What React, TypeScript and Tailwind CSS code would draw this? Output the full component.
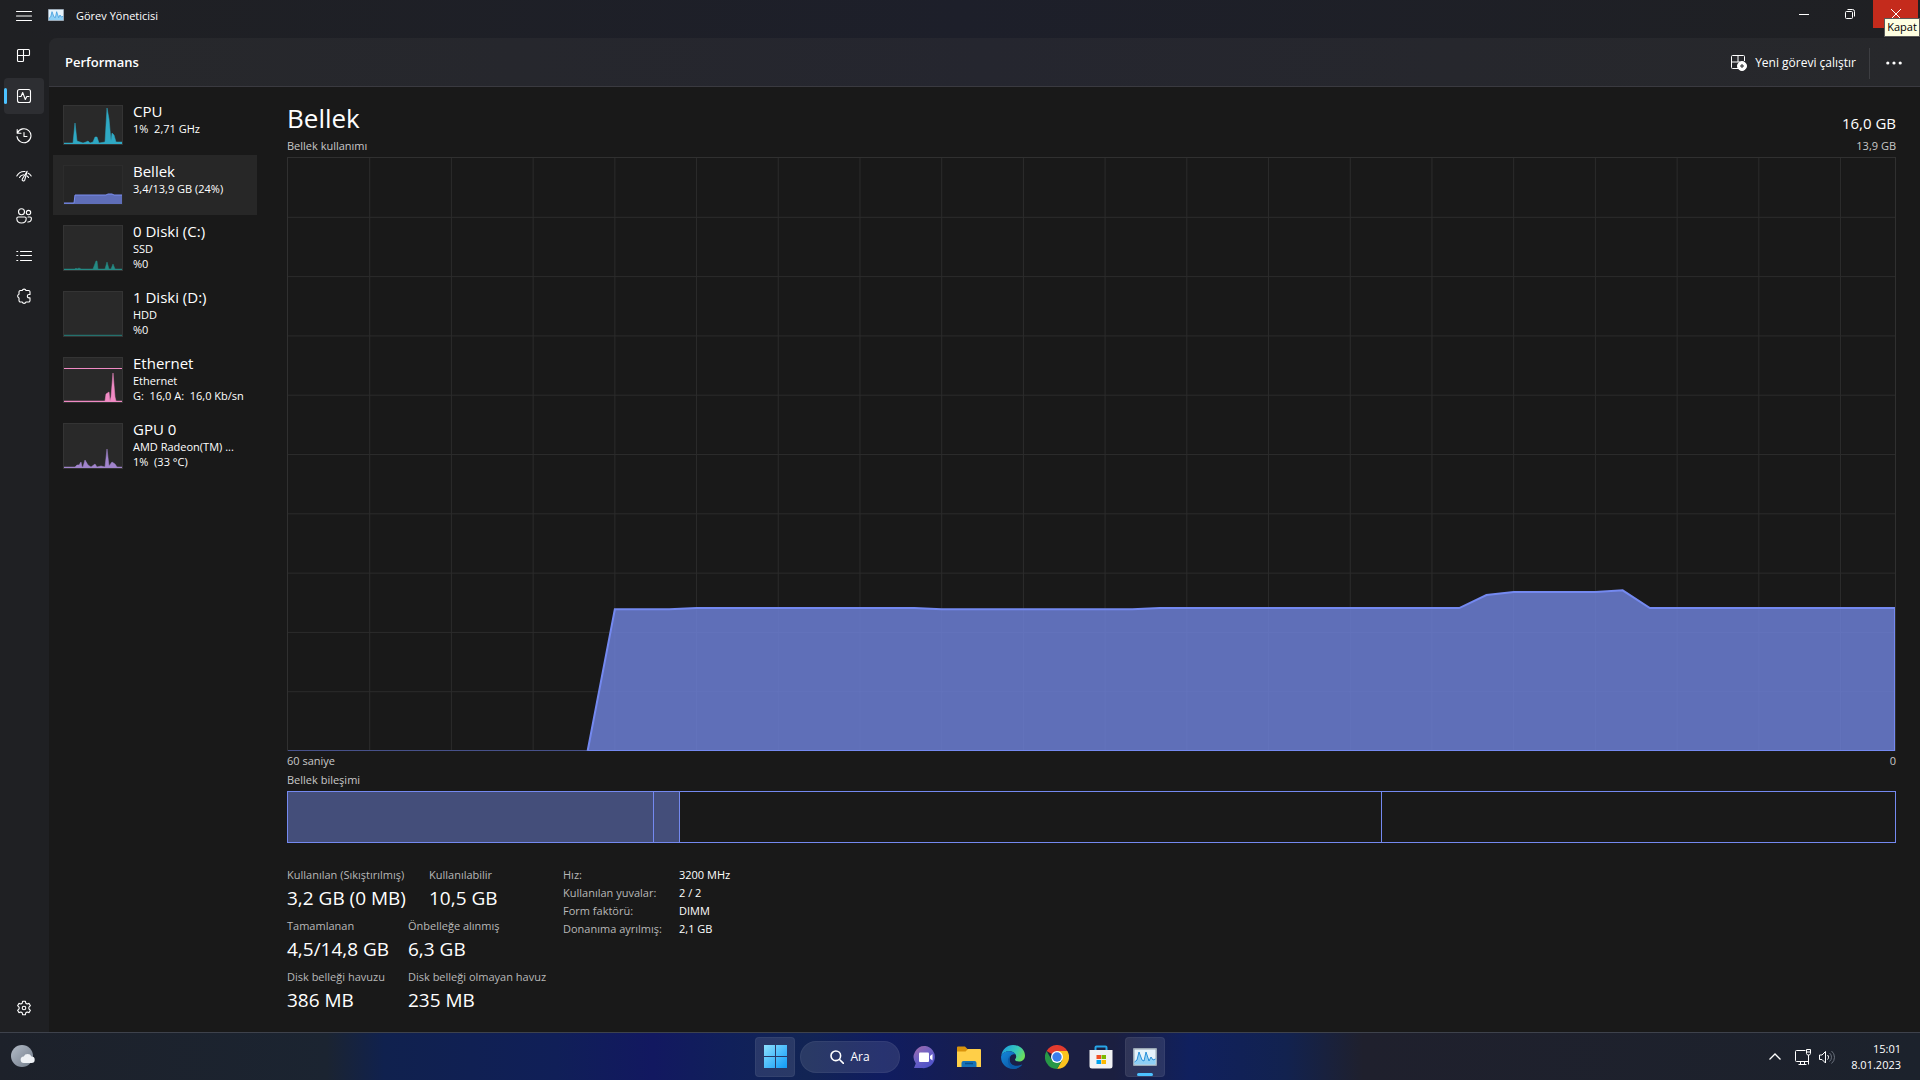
import type { ReactNode } from 'react';
import clsx from 'clsx';

type Resource = {
  id: string;
  title: string;
  lines: string[];
  color: string;
  fill: string;
  area: string;
  line?: string;
};

const resources: Resource[] = [
  {
    id: 'cpu', title: 'CPU', lines: ['1%  2,71 GHz'], color: '#2fa9c4', fill: '#2fa9c4',
    area: '1,38 10,38 12,18 14,36 17,37 20,38 23,37 25,36 27,38 30,37 32,32 34,32 36,38 42,37 44,3 46,14 48,36 49,28 51,30 53,37 56,37 59,37',
  },
  {
    id: 'mem', title: 'Bellek', lines: ['3,4/13,9 GB (24%)'], color: '#7a8df0', fill: '#5f6eb8',
    area: '1,38 11,38 12,30 43,30 45,29 49,29 51,30 59,30',
  },
  {
    id: 'disk0', title: '0 Diski (C:)', lines: ['SSD', '%0'], color: '#248a84', fill: '#248a84',
    area: '1,44 12,44 13,43 14,44 16,43 18,44 30,44 33,36 34,36 35,44 42,44 44,37 46,44 48,44 50,39 52,44 59,44',
  },
  { id: 'disk1', title: '1 Diski (D:)', lines: ['HDD', '%0'], color: '#24706c', fill: '#24706c', area: '1,44 59,44' },
  {
    id: 'eth', title: 'Ethernet', lines: ['Ethernet', 'G:  16,0 A:  16,0 Kb/sn'], color: '#f08ac4', fill: '#f08ac4',
    area: '1,44 42,44 43,37 46,35 47,44 48,40 50,16 52,40 53,44 59,44', line: '1,11.5 59,11.5',
  },
  {
    id: 'gpu', title: 'GPU 0', lines: ['AMD Radeon(TM) ...', '1%  (33 °C)'], color: '#a184cc', fill: '#a184cc',
    area: '1,44 12,44 14,42 16,42 18,39 19,44 20,44 22,37 25,42 28,44 32,41 34,44 38,43 42,44 44,26 46,43 49,39 52,41 54,44 59,44',
  },
];

const samples = [
  [11, 0], [12, 23.9], [14, 23.9], [15, 24.1], [23, 24.1], [24, 23.9], [31, 23.9], [32, 24.1],
  [43, 24.1], [44, 26.3], [45, 26.8], [48, 26.8], [49, 27.1], [50, 24.1], [59, 24.1],
];

const statRows = [
  [['Kullanılan (Sıkıştırılmış)', '3,2 GB (0 MB)'], ['Kullanılabilir', '10,5 GB']],
  [['Tamamlanan', '4,5/14,8 GB'], ['Önbelleğe alınmış', '6,3 GB']],
  [['Disk belleği havuzu', '386 MB'], ['Disk belleği olmayan havuz', '235 MB']],
];

const details = [
  ['Hız:', '3200 MHz'],
  ['Kullanılan yuvalar:', '2 / 2'],
  ['Form faktörü:', 'DIMM'],
  ['Donanıma ayrılmış:', '2,1 GB'],
];

function Icon({ children }: { children: ReactNode }) {
  return (
    <svg className="w-4 h-4" viewBox="0 0 16 16" fill="none" stroke="currentColor" strokeWidth="1.1" strokeLinecap="round" strokeLinejoin="round">
      {children}
    </svg>
  );
}

const navItems = [
  {
    label: 'İşlemler',
    icon: <Icon><path d="M2.500 1.500h10a1 1 0 0 1 1 1v4a1 1 0 0 1-1 1H7.500v5a1 1 0 0 1-1 1h-4a1 1 0 0 1-1-1v-10a1 1 0 0 1 1-1zM1.500 7.500h6v-6" /></Icon>,
  },
  {
    label: 'Performans',
    icon: <Icon><rect x="1.500" y="1.500" width="13" height="13" rx="2" /><path d="M3 8.500h2l1.700-4 2.600 7 1.500-3H13" /></Icon>,
  },
  {
    label: 'Uygulama geçmişi',
    icon: <Icon><path d="M1.200 1.500v3.800H5M1.500 5A7 7 0 1 1 1 8.500M8 4.500v4h3" /></Icon>,
  },
  {
    label: 'Başlangıç uygulamaları',
    icon: <Icon><path d="M.8 8A8.500 8.500 0 0 1 9 3.500M3.500 9.500a5 5 0 0 1 4-2.800M15.200 8a8 8 0 0 0-3-2.700M12.500 9.500a5 5 0 0 0-1.300-1.500M11.200 3.200 6.300 11a1.300 1.300 0 0 0 2.400 1.200z" /></Icon>,
  },
  {
    label: 'Kullanıcılar',
    icon: <Icon><circle cx="5.500" cy="3.800" r="3" /><circle cx="12.500" cy="4.600" r="2.200" /><path d="M.8 10.500a1.500 1.500 0 0 1 1.500-1.500h6.400a1.500 1.500 0 0 1 1.500 1.500c0 2.800-1.800 4.500-4.700 4.500S.8 13.300.8 10.500zM12 9h2a1.500 1.500 0 0 1 1.400 1.500c0 2.200-1.200 3.500-3.600 3.500" /></Icon>,
  },
  {
    label: 'Ayrıntılar',
    icon: <Icon><path d="M4.500 3.500h11M4.500 7.500h11M4.500 12.500h11M.8 3.500h1M.8 7.500h1M.8 12.500h1" /></Icon>,
  },
  {
    label: 'Hizmetler',
    icon: <Icon><path d="M6.200 2.500a2 2 0 0 1 3.800 0h2.500A1.500 1.500 0 0 1 14 4v2.500h-1a1.700 1.700 0 0 0 0 3.400h1v2.600a1.500 1.500 0 0 1-1.500 1.500H10a2 2 0 0 1-3.800 0H4.500A1.500 1.500 0 0 1 3 12.500V10a2 2 0 0 1 0-3.800V4a1.500 1.500 0 0 1 1.500-1.500z" /></Icon>,
  },
];

function TaskManagerLogo({ className }: { className: string }) {
  return (
    <svg className={className} viewBox="0 0 24 18">
      <rect width="24" height="18" rx="1" fill="#9aa8b5" />
      <rect x="1.500" y="1.500" width="21" height="15" fill="#e6f3fb" />
      <path d="M1.500 14 4 12l2-8 3 8 2 1 2-9 3 9 2-4 2 3 2.500-1v5.500h-21z" fill="#8fd0f5" />
      <path d="m1.500 14 2.500-2 2-8 3 8 2 1 2-9 3 9 2-4 2 3 2.500-1" fill="none" stroke="#2a90d8" />
    </svg>
  );
}

function TitleBar() {
  return (
    <header className="relative flex h-[38px] items-start bg-linear-to-r from-[#1f2023] via-[#1d1f2a] to-[#1f2023]">
      <button aria-label="Menü" className="ml-4 mt-2"><Icon><path d="M.5 3.500h15M.5 8h15M.5 12.500h15" /></Icon></button>
      <TaskManagerLogo className="ml-4 mt-[9px] h-3 w-4" />
      <h1 className="ml-3 mt-2 flex-1 text-[11px] leading-4">Görev Yöneticisi</h1>
      <div className="mr-[2px] flex">
        <button aria-label="Simge durumuna küçült" className="flex h-7 w-[46px] items-center justify-center"><span className="h-px w-[10px] bg-white" /></button>
        <button aria-label="Önceki boyut" className="flex h-7 w-[46px] items-center justify-center">
          <svg className="h-[10px] w-[10px]" viewBox="0 0 10 10" fill="none" stroke="white"><rect x=".5" y="2.500" width="7" height="7" rx="1" /><path d="M2.500.5h5a2 2 0 0 1 2 2v5" /></svg>
        </button>
        <button aria-label="Kapat" aria-describedby="close-tip" className="flex h-7 w-[45px] items-center justify-center bg-[#c42b1c]">
          <svg className="h-[10px] w-[10px]" viewBox="0 0 10 10" stroke="white"><path d="m0 0 10 10M10 0 0 10" /></svg>
        </button>
      </div>
      <div id="close-tip" role="tooltip" className="absolute right-0 top-[18px] z-10 flex h-[19px] w-9 items-center justify-center border border-[#5a5a5a] bg-[#ffffe1] text-[11px] text-black">Kapat</div>
    </header>
  );
}

function Sidebar() {
  return (
    <nav className="flex w-[49px] shrink-0 flex-col gap-1 bg-[#1f2023] pb-[6px] pl-1">
      {navItems.map((item, i) => (
        <button key={item.label} aria-label={item.label} className={clsx('relative flex h-9 w-10 items-center justify-center rounded', i === 1 && 'bg-[#2d2e32]')}>
          {i === 1 && <span className="absolute left-0 top-[10px] h-4 w-[3px] rounded-full bg-[#4cc2ff]" />}
          {item.icon}
        </button>
      ))}
      <button aria-label="Ayarlar" className="mt-auto flex h-9 w-10 items-center justify-center">
        <Icon>
          <circle cx="8" cy="8" r="1.800" />
          <path d="M6.700 1.200h2.600l.5 2 1.300.8 2-.6 1.300 2.300-1.500 1.400v1.800l1.500 1.400-1.300 2.300-2-.6-1.300.8-.5 2H6.700l-.5-2-1.300-.8-2 .6-1.300-2.300 1.500-1.400V7.100L1.600 5.700l1.300-2.300 2 .6 1.300-.8z" />
        </Icon>
      </button>
    </nav>
  );
}

function ResourceItem({ item }: { item: Resource }) {
  const h = item.lines.length > 1 ? 46 : 40;
  const active = item.id === 'mem';
  return (
    <button className={clsx('flex w-full items-start gap-[10px] px-[10px] pt-[10px] text-left', item.lines.length > 1 ? 'h-[66px]' : 'h-[60px]', active && 'bg-[#272727]')}>
      <svg className={clsx('w-[60px] shrink-0', h === 46 ? 'h-[46px]' : 'h-10')} viewBox={`0 0 60 ${h}`}>
        <rect x=".5" y=".5" width="59" height={h - 1} fill={active ? '#252525' : '#292929'} stroke={active ? '#2c2c2c' : '#343434'} />
        <polygon points={`${item.area} 59,${h - 1} 1,${h - 1}`} fill={item.fill} />
        <polyline points={item.area} fill="none" stroke={item.color} strokeWidth={active ? 1 : 0.5} />
        {item.line && <polyline points={item.line} fill="none" stroke={item.color} />}
      </svg>
      <span className="-mt-1 block min-w-0 whitespace-nowrap">
        <span className="block text-[15px] leading-5">{item.title}</span>
        {item.lines.map((l) => <span key={l} className="block whitespace-pre text-[11px] leading-[15px]">{l}</span>)}
      </span>
    </button>
  );
}

function MemoryChart() {
  const points = samples.map(([x, v]) => `${x},${100 - v}`).join(' ');
  const vertical = Array.from({ length: 19 }, (_, i) => (i + 1) * 3);
  const horizontal = Array.from({ length: 9 }, (_, i) => (i + 1) * 10);
  return (
    <div className="min-h-0 flex-1 border border-b-0 border-[#303030]">
      <svg className="block h-full w-full" viewBox="0 0 59 100" preserveAspectRatio="none">
        <g stroke="#2c2c2c" shapeRendering="crispEdges">
          {vertical.map((x) => <line key={x} x1={x} x2={x} y1="0" y2="100" vectorEffect="non-scaling-stroke" />)}
          {horizontal.map((y) => <line key={y} x1="0" x2="59" y1={y} y2={y} vectorEffect="non-scaling-stroke" />)}
        </g>
        <polygon points={`${points} 59,100`} fill="#7084e0" fillOpacity="0.8" />
        <line x1="0" x2="11" y1="100" y2="100" stroke="#47518a" strokeWidth="2" vectorEffect="non-scaling-stroke" />
        <polyline points={`${points} 59,100 11,100`} fill="none" stroke="#7489f0" strokeWidth="2" vectorEffect="non-scaling-stroke" />
      </svg>
    </div>
  );
}

function MemoryPanel() {
  return (
    <main className="flex min-w-0 flex-1 flex-col pb-[17px] pl-[30px] pr-6 pt-[14px]">
      <div className="flex items-end justify-between">
        <h2 className="text-[26px] leading-[34px]">Bellek</h2>
        <span className="text-[15px] leading-6">16,0 GB</span>
      </div>
      <div className="flex h-[22px] items-center justify-between text-[11px] text-[#c8c8c8]"><span>Bellek kullanımı</span><span>13,9 GB</span></div>
      <MemoryChart />
      <div className="flex h-5 items-center justify-between text-[11px] text-[#c8c8c8]"><span>60 saniye</span><span>0</span></div>
      <div className="flex h-5 items-start text-[11px] leading-[18px] text-[#c8c8c8]">Bellek bileşimi</div>
      <div className="flex h-[52px] border border-[#7489f0]">
        <div className="w-[22.8%] border-r border-[#7489f0] bg-[#444e7a]" />
        <div className="w-[1.6%] border-r border-[#7489f0] bg-[#444e7a]" />
        <div className="w-[43.7%] border-r border-[#7489f0]" />
      </div>
      <div className="mt-6 flex">
        <div className="flex w-[276px] flex-col gap-[5px] whitespace-nowrap">
          {statRows.map((row, i) => (
            <dl key={i} className="flex">
              {row.map(([label, value], col) => (
                <div key={label} className={clsx(col === 0 && (i === 0 ? 'w-[142px]' : 'w-[121px]'))}>
                  <dt className="text-[11px] leading-4 text-[#b8b8b8]">{label}</dt>
                  <dd className="text-[19px] leading-[30px]">{value}</dd>
                </div>
              ))}
            </dl>
          ))}
        </div>
        <table className="self-start whitespace-nowrap text-left text-[11px] leading-4">
          <tbody>
            {details.map(([label, value]) => (
              <tr key={label}><th scope="row" className="w-[116px] p-0 pb-[2px] font-normal text-[#b8b8b8]">{label}</th><td className="p-0 pb-[2px]">{value}</td></tr>
            ))}
          </tbody>
        </table>
      </div>
    </main>
  );
}

function TaskButton({ label, active, children }: { label: string; active?: boolean; children: ReactNode }) {
  return (
    <button aria-label={label} className={clsx('flex h-10 w-10 items-center justify-center rounded', active && 'border border-white/5 bg-white/10')}>
      {children}
    </button>
  );
}

function Taskbar() {
  return (
    <footer className="grid h-12 shrink-0 grid-cols-[1fr_auto_1fr] items-center border-t border-[#3e424c] bg-[linear-gradient(90deg,#1d212a_0%,#1b2431_17%,#10214e_20%,#101f58_29%,#121860_34%,#10205a_38%,#122454_42%,#101c60_46%,#1b1f44_54%,#1b1f40_58%,#10205e_62%,#12224f_67%,#1f202d_71%,#1c222c_100%)]">
      <button aria-label="Hava durumu" className="ml-[11px] w-6">
        <svg className="h-6 w-6" viewBox="0 0 24 24">
          <defs><linearGradient id="moon" x1="0" y1="0" x2="1" y2="1"><stop stopColor="#b4bcc8" /><stop offset="1" stopColor="#717c8a" /></linearGradient></defs>
          <circle cx="11" cy="11" r="11" fill="url(#moon)" />
          <path d="M13 18a3.200 3.200 0 0 1-.3-6.400 4.300 4.300 0 0 1 7.800 0A3.200 3.200 0 0 1 20.500 18z" fill="#eef1f5" />
        </svg>
      </button>
      <div className="flex items-center gap-1">
        <TaskButton label="Başlat" active>
          <svg className="h-[23px] w-[23px]" viewBox="0 0 23 23">
            <defs><linearGradient id="win" x1="0" y1="0" x2="1" y2="1"><stop stopColor="#8ce0ff" /><stop offset="1" stopColor="#0f9bf8" /></linearGradient></defs>
            <path d="M0 0h11v11H0zM12 0h11v11H12zM0 12h11v11H0zM12 12h11v11H12z" fill="url(#win)" />
          </svg>
        </TaskButton>
        <button className="mx-px flex h-8 w-[100px] items-center justify-center gap-[6px] rounded-full border border-white/5 bg-white/10 text-xs">
          <svg className="h-[14px] w-[14px]" viewBox="0 0 14 14" fill="none" stroke="white" strokeWidth="1.600" strokeLinecap="round"><circle cx="5.800" cy="5.800" r="4.800" /><path d="m9.500 9.500 4 4" /></svg>
          Ara
        </button>
        <TaskButton label="Sohbet">
          <svg className="h-6 w-6" viewBox="0 0 24 24">
            <defs><linearGradient id="chat" x1="0" y1="0" x2=".6" y2="1"><stop stopColor="#a86ba8" /><stop offset=".5" stopColor="#6f62c4" /><stop offset="1" stopColor="#4f52c8" /></linearGradient></defs>
            <path d="M12.500 1A11 11 0 1 1 9 23H1l1.800-4.500A11 11 0 0 1 12.500 1z" fill="url(#chat)" />
            <rect x="6" y="7.500" width="10" height="9.500" rx="1" fill="white" /><path d="m17 11 2.500-2v6.500L17 13.500z" fill="white" />
          </svg>
        </TaskButton>
        <TaskButton label="Dosya Gezgini">
          <svg className="h-6 w-6" viewBox="0 0 24 24">
            <path d="M0 2.500A1 1 0 0 1 1 1.500h7l2.500 2.500H23v5H0z" fill="#d9930c" />
            <path d="M0 6.500h8.500l2.500-2.500h12a1 1 0 0 1 1 1v17H0z" fill="#ffcf48" />
            <path d="M4.500 22v-4a2 2 0 0 1 2-2h11a2 2 0 0 1 2 2v4z" fill="#1672b8" /><path d="M8 18.500h8" stroke="#0b4f87" strokeWidth="1.500" />
          </svg>
        </TaskButton>
        <TaskButton label="Microsoft Edge">
          <svg className="h-6 w-6" viewBox="0 0 24 24">
            <defs>
              <linearGradient id="edgeTop" x1="0" y1=".2" x2="1" y2=".6"><stop stopColor="#1c9de0" /><stop offset=".6" stopColor="#36c9b8" /><stop offset="1" stopColor="#6ddf58" /></linearGradient>
              <linearGradient id="edgeLow" x1="0" y1="0" x2="1" y2="1"><stop stopColor="#1288dc" /><stop offset="1" stopColor="#0c4b94" /></linearGradient>
            </defs>
            <path d="M.3 10.500C1.300 4.500 6 0 12 0c7 0 12 5 12 10.500 0 4-3 6-6 6-2.500 0-4-1-4-1.800s1.200-1.200 1.200-3.200c0-2.500-2.800-5.200-6.700-5.200C4.500 6.300 1.500 8 .3 10.500z" fill="url(#edgeTop)" />
            <path d="M.1 11.500C1 8.500 4 6.300 8.500 6.300c3 0 5.200 1.500 6.200 3.200-3.500-1-6.200 1.500-6.200 5 0 5 5 8 10 6.300 1.200-.4 2-1 2.700-1.300A12 12 0 0 1 12 24C5 24-.5 18 .1 11.500z" fill="url(#edgeLow)" />
            <path d="M9.500 10.500c-5 4-2 11.500 3 13.500 4 0 7-2 8.700-4.500-5.700 3.200-12.700.5-12.700-5 0-1.600.4-3 1-4z" fill="#0a5aa8" />
          </svg>
        </TaskButton>
        <TaskButton label="Google Chrome">
          <svg className="h-6 w-6" viewBox="0 0 24 24">
            <path d="M12 12 1.600 6A12 12 0 0 1 22.400 6z" fill="#e33b2e" />
            <path d="M12 6h10.400A12 12 0 0 1 12 24l5.200-9z" fill="#fcc31e" />
            <path d="M1.600 6A12 12 0 0 0 12 24l5.200-9H6.800z" fill="#279847" />
            <circle cx="12" cy="12" r="6" fill="white" /><circle cx="12" cy="12" r="4.700" fill="#3b7ded" />
          </svg>
        </TaskButton>
        <TaskButton label="Microsoft Store">
          <svg className="h-6 w-6" viewBox="0 0 24 24">
            <path d="M6.500 6V2.500a1 1 0 0 1 1-1h9a1 1 0 0 1 1 1V6" fill="none" stroke="#27a5e8" strokeWidth="2" />
            <path d="M.5 5h23v16a2.500 2.500 0 0 1-2.500 2.500H3A2.500 2.500 0 0 1 .5 21z" fill="#f1f2f4" />
            <path d="M7.500 10H12v4H7.500z" fill="#f04e23" /><path d="M12.500 10H17v4h-4.500z" fill="#7db900" /><path d="M7.500 15H12v4H7.500z" fill="#00a2ee" /><path d="M12.500 15H17v4h-4.500z" fill="#fdb900" />
          </svg>
        </TaskButton>
        <div className="relative">
          <TaskButton label="Görev Yöneticisi" active><TaskManagerLogo className="h-[18px] w-6" /></TaskButton>
          <span className="absolute bottom-px left-3 h-[3px] w-4 rounded-full bg-[#4cc2ff]" />
        </div>
      </div>
      <div className="mr-[19px] flex items-center justify-end text-[11px]">
        <button aria-label="Gizli simgeleri göster" className="mr-[14px]">
          <svg className="h-[7px] w-3" viewBox="0 0 12 7" fill="none" stroke="white" strokeWidth="1.300"><path d="m.5 6.500 5.500-5.500 5.500 5.500" /></svg>
        </button>
        <button aria-label="Ağ ve ses" className="mr-4 flex gap-2">
          <svg className="h-4 w-4" viewBox="0 0 16 16" fill="none" stroke="white"><path d="M10.500 1.500h-9a1 1 0 0 0-1 1v9a1 1 0 0 0 1 1h12M3.500 15.500h8M5.500 12.500v3M9.500 12.500v3M11.500.5h4v4l-1 1.500h-2l-1-1.500zM11.500 3h4M13.500 6v9.500" /></svg>
          <svg className="h-4 w-4" viewBox="0 0 16 16" fill="none" stroke="white"><path d="M.5 6v4.500H3L6.500 14V2.500L3 6zM8.500 6a3 3 0 0 1 0 4.500" /><path d="M10.500 4a5.500 5.500 0 0 1 0 8.500M12.500 2a8 8 0 0 1 0 12.500" stroke="#69707c" /></svg>
        </button>
        <time className="text-right leading-4" dateTime="2023-01-08T15:01">15:01<br />8.01.2023</time>
      </div>
    </footer>
  );
}

export default function App() {
  return (
    <div className="flex h-screen flex-col overflow-hidden bg-[#1f2023] font-['Open_Sans','Noto_Sans',sans-serif] text-white">
      <TitleBar />
      <div className="flex min-h-0 flex-1">
        <Sidebar />
        <div className="flex min-w-0 flex-1 flex-col">
          <div className="flex h-[49px] shrink-0 items-center rounded-tl-lg border-b border-[#3a3a40] bg-linear-to-r from-[#27282b] via-[#25262f] to-[#27282b] pl-4 pr-[18px] pt-[2px]">
            <h2 className="flex-1 text-[13px] font-semibold">Performans</h2>
            <button className="flex items-center gap-2 pr-[13px] text-xs">
              <svg className="h-4 w-4" viewBox="0 0 16 16" fill="none" stroke="white"><path d="M8 13.500H1.500a1 1 0 0 1-1-1v-11a1 1 0 0 1 1-1h11a1 1 0 0 1 1 1V6M.5 7H9M7 .5V7" /><circle cx="11" cy="11" r="4.500" fill="white" /><path d="M11 9v4M9 11h4" stroke="#27282b" /></svg>
              Yeni görevi çalıştır
            </button>
            <div className="h-[31px] w-px bg-[#3d3e42]" />
            <button aria-label="Diğer seçenekler" className="ml-4">
              <svg className="h-4 w-4" viewBox="0 0 16 16" fill="white"><circle cx="1.800" cy="8" r="1.600" /><circle cx="8" cy="8" r="1.600" /><circle cx="14.200" cy="8" r="1.600" /></svg>
            </button>
          </div>
          <div className="flex min-h-0 flex-1 bg-[#191919]">
            <aside className="w-52 shrink-0 pl-1 pt-2">
              {resources.map((item) => <ResourceItem key={item.id} item={item} />)}
            </aside>
            <MemoryPanel />
          </div>
        </div>
      </div>
      <Taskbar />
    </div>
  );
}
